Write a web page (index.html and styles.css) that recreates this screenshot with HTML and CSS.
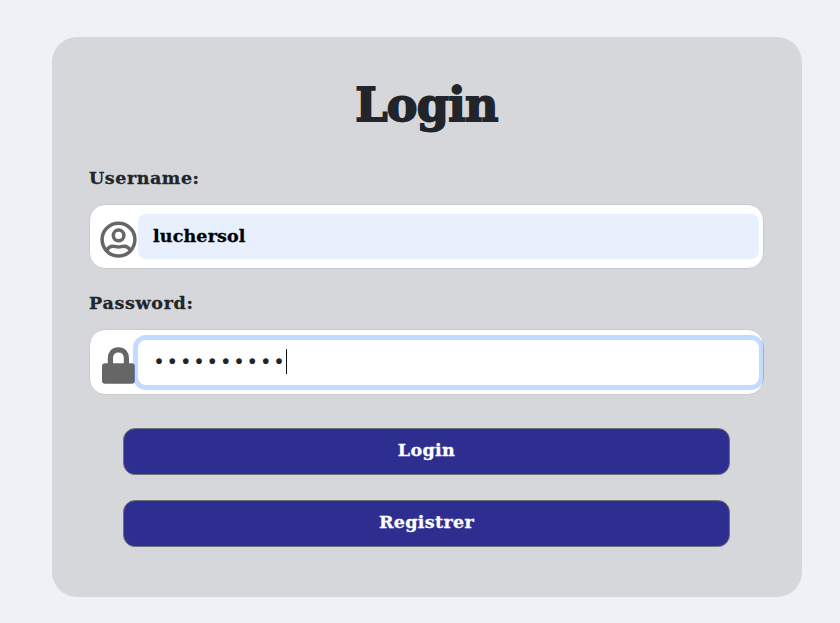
FILE: index.html
```html
<!DOCTYPE html>
<html lang="en">
<head>
<meta charset="utf-8">
<title>Login</title>
<link rel="stylesheet" href="styles.css">
</head>
<body>
<main class="card">
  <h1 class="title"><span>Login</span></h1>
  <label class="label label-user">Username:</label>
  <div class="field">
    <svg class="icon" viewBox="0 0 38 38" fill="none" stroke="#666" stroke-width="3.5">
      <circle cx="18.5" cy="18.6" r="16.4"/>
      <circle cx="18.6" cy="14.4" r="5.3"/>
      <path d="M6.2 30C7.8 26.7 10.3 25.2 13 25.2c2.2 0 3.3.8 5.5.8s3.3-.8 5.5-.8c2.7 0 5.2 1.5 6.8 4.8"/>
    </svg>
    <div class="input filled"><span class="value">luchersol</span></div>
  </div>
  <label class="label label-pass">Password:</label>
  <div class="field field-pass">
    <svg class="icon" viewBox="0 0 38 38">
      <path fill="none" stroke="#666" stroke-width="5.2" d="M10.4 18v-5.8c0-5 3-8.4 8-8.4s8 3.4 8 8.4V18"/>
      <rect x="2" y="17.2" width="32.8" height="20.6" rx="3" fill="#666"/>
    </svg>
    <div class="input focused"><span class="dots">••••••••••</span><span class="caret"></span></div>
  </div>
  <button class="button"><span class="button-login">Login</span></button>
  <button class="button"><span class="button-register">Registrer</span></button>
</main>
</body>
</html>
```
FILE: styles.css
```css
* { box-sizing: border-box; }
body {
  margin: 0;
  padding: 37px 38px 26px 52px;
  background: #f0f1f6;
  color: #212529;
  font-family: "DejaVu Serif", serif;
  font-weight: 700;
}
.card {
  display: flex;
  flex-direction: column;
  width: 750px;
  height: 560px;
  padding: 37px 38px 0 37px;
  border-radius: 25px;
  background: #d6d7db;
}
.title {
  margin: 0;
  height: 60px;
  font-size: 46px;
  line-height: 62px;
  text-align: center;
  letter-spacing: -.7px;
  -webkit-text-stroke: 1.8px #212529;
}
.label {
  height: 25px;
  font-size: 17.5px;
  line-height: 25px;
  -webkit-text-stroke: .3px currentColor;
}
.label-user { margin-top: 32px; letter-spacing: .55px; }
.label-pass { margin-top: 22px; letter-spacing: .7px; }
.field {
  display: flex;
  align-items: flex-start;
  height: 65px;
  margin-top: 13px;
  padding: 9px 4px 8px 10px;
  border: 1px solid #c9cacb;
  border-radius: 16px;
  background: #fff;
}
.field-pass { height: 66px; padding-top: 10px; margin-bottom: 21px; }
.icon {
  flex: none;
  width: 38px;
  height: 38px;
  margin-top: 7px;
}
.field-pass .icon { margin-top: 6px; }
.input {
  position: relative;
  display: flex;
  align-items: center;
  flex: 1;
  height: 45px;
  padding-left: 15px;
  border-radius: 8px;
  background: #fff;
  font-size: 17.5px;
}
.filled { background: #e8effd; color: #000; }
.focused { box-shadow: 0 0 0 5px rgba(13, 110, 253, .25); }
.value {
  line-height: 25px;
  letter-spacing: .15px;
  -webkit-text-stroke: .3px currentColor;
}
.dots {
  width: 133px;
  margin-top: -2px;
  padding-left: 2.5px;
  white-space: nowrap;
  font: 700 20px/25px "Liberation Sans", sans-serif;
  letter-spacing: 6.33px;
}
.caret { width: 1px; height: 25px; margin-top: -2px; background: #111; }
.button {
  width: 607px;
  height: 47px;
  margin: 12px 0 13px 34px;
  padding: 0 0 2px;
  border: 1px solid #6c757d;
  border-radius: 12px;
  background: #2e2e91;
  color: #fff;
  font: 700 17.5px/25px "DejaVu Serif", serif;
  letter-spacing: .35px;
  -webkit-text-stroke: .3px currentColor;
}
```
